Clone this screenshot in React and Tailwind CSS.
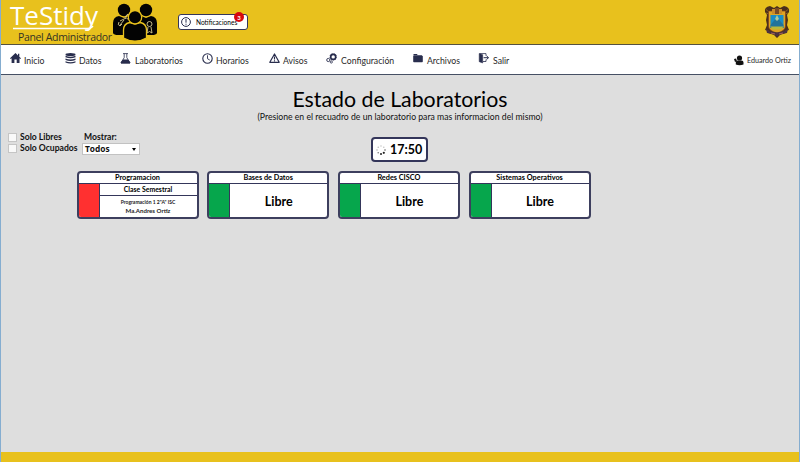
import React from 'react';

const ink = '#282d4d';

function HomeIcon() {
  return (
    <svg width="11" height="10" viewBox="0 0 11 10" fill={ink}>
      <path d="M5.5 0 8 2.4V.8h1.3v2.9L11 5.3l-.7.7-.8-.7V10H6.7V6.6H4.4V10H1.6V5.3l-.9.7L0 5.3z" />
    </svg>
  );
}

function DataIcon() {
  return (
    <svg width="11" height="11" viewBox="0 0 11 11" fill={ink}>
      <ellipse cx="5.5" cy="1.6" rx="5" ry="1.5" />
      <path d="M.5 2.800q5 1.700 10 0v1.500q-5 2-10 0zM.5 5.500q5 2 10 0V7q-5 2-10 0zM.5 8.200q5 2 10 0v1.300q-5 2.200-10 0z" />
    </svg>
  );
}

function FlaskIcon() {
  return (
    <svg width="11" height="11" viewBox="0 0 11 11" fill="none" stroke={ink}>
      <path d="M3 .6h5M4.2.6v4L1 10h9L6.8 4.6v-4" strokeWidth=".8" />
      <path d="M2.700 7h5.600L10 10H1z" fill={ink} />
    </svg>
  );
}

function ClockIcon() {
  return (
    <svg width="11" height="11" viewBox="0 0 11 11" fill="none" stroke={ink}>
      <circle cx="5.5" cy="5.5" r="4.7" strokeWidth="1.1" />
      <path d="M5.5 2.3v3.4l2.3 1.4" strokeWidth=".9" />
    </svg>
  );
}

function WarningIcon() {
  return (
    <svg width="11" height="11" viewBox="0 0 11 11" fill="none" stroke={ink}>
      <path d="M5.5 1 10.2 9.3H.8z" strokeWidth="1.2" strokeLinejoin="round" />
      <path d="M5.5 3.6v3M5.5 7.3v1.1" strokeWidth="1.1" />
    </svg>
  );
}

function GearsIcon() {
  return (
    <svg width="11" height="11" viewBox="0 0 11 11" fill="none" stroke={ink}>
      <circle cx="7.2" cy="3.9" r="2.5" strokeWidth="1.6" />
      <circle cx="7.2" cy="3.9" r="3.4" strokeWidth=".7" strokeDasharray="1.2 1.1" />
      <circle cx="2.3" cy="7" r="1.6" strokeWidth=".9" />
      <circle cx="5.3" cy="9" r="1.100" strokeWidth=".8" />
    </svg>
  );
}

function FolderIcon() {
  return (
    <svg width="10" height="10" viewBox="0 0 10 10" fill={ink}>
      <path d="M.4 1.500q0-.5.5-.5h3l.8 1h4q.6 0 .6.700H.4zM.2 2.900h9.6v5.700q0 .7-.7.7H.9q-.7 0-.7-.7z" />
    </svg>
  );
}

function ExitIcon() {
  return (
    <svg width="11" height="11" viewBox="0 0 11 11" fill="none" stroke={ink}>
      <path d="M1.200.6 4.700 1.700v8.300L1.200 8.700z" fill={ink} strokeWidth=".5" />
      <path d="M1.500.6H8v2.200M8 6.500v2H5" strokeWidth=".8" />
      <path d="M5.600 4.700h4.800M8.500 2.800l2 1.900-2 1.900" strokeWidth="1" />
    </svg>
  );
}

function PeopleLogo() {
  return (
    <svg className="mt-[3px] shrink-0" width="48" height="40" viewBox="0 0 48 40">
      <g fill="#030303">
        <circle cx="14" cy="7" r="6.200" />
        <path d="M3 30V20q0-6 6-7l5 2 5-2q6 1 6 7v12H8q-4 0-5-2z" />
        <circle cx="36" cy="7" r="6.200" />
        <path d="M47 30V20q0-6-6-7l-5 2-5-2q-6 1-6 7v12h17q4 0 5-2z" />
      </g>
      <g fill="none" stroke="#d8cc94" strokeWidth=".9">
        <path d="m10 18 6-3m-7 4q-2 3 1 4l2-2m4-5q-1-4 2-5l1 2 2-1q0 4-4 4m-7 6 4-5" />
        <circle cx="39.500" cy="21" r="2.500" />
        <path d="m38 24-1 6 2.500-1.500L42 30l-1-6" />
      </g>
      <g fill="#030303" stroke="#e8c11d" strokeWidth="1.300">
        <path d="M13.500 35v-8q0-6 6-7.500l5.500 1.500 5.500-1.500q6 1.500 6 7.500v8q-11.500 6.500-23 0z" />
        <circle cx="25" cy="14.200" r="6.700" />
      </g>
    </svg>
  );
}

function Crest() {
  return (
    <svg width="26" height="34" viewBox="0 0 26 34">
      <path d="M6 1Q0 2 1 7l2 3-1 5 1 5-2 5 4 1-1 2 6 2 3 3 3-3 6-2-1-2 4-1-2-5 1-5-1-5 2-3q1-5-5-6l-4 2-3-2-3 2z" fill="#4a2f1c" />
      <path d="M2 4.500 5 7M2 8l3 1M24 4.500 21 7M24 8l-3 1" stroke="#a47425" strokeWidth=".7" />
      <path d="M4.500 6h17v15q0 5-8.500 7-8.500-2-8.500-7z" fill="#dfa321" stroke="#7a3c1b" strokeWidth=".7" />
      <path d="M8 4h10v5H8z" fill="#c98a28" />
      <path d="M11 3h4v6h-4z" fill="#7b4a22" />
      <path d="M6.500 10h13v13h-13z" fill="#1a8cc4" />
      <path d="m6.500 20 6.500-8 6.500 8v3h-13z" fill="#22739a" />
      <path d="m11 14 2-4 2 4-2 2z" fill="#a9c9a0" />
      <path d="M6.500 21.500h13l-2 3h-9z" fill="#b9b83a" />
      <path d="m2 24 5 2.500 6 1 6-1 5-2.500-1 4-7 1-3 2.500-3-2.500-7-1z" fill="#4c3240" />
      <path d="m7 28 4 1m4 0 4-1" stroke="#c06f61" strokeWidth=".8" />
    </svg>
  );
}

function UserIcon() {
  return (
    <svg width="10" height="11" viewBox="0 0 10 11" fill="#111">
      <circle cx="5.500" cy="3" r="2.600" />
      <path d="M1.800 9.500V7.500q0-2 2-2h3.700q2 0 2 2v2q-4 1.500-7.700 0z" />
      <path d="m0 4 2-.5 1 2.700-2 .8z" />
    </svg>
  );
}

function Spinner() {
  return (
    <svg width="10" height="10" viewBox="0 0 10 10" fill="#222">
      <circle cx="5" cy="1" r=".7" opacity=".3" />
      <circle cx="7.800" cy="2.200" r=".7" opacity=".3" />
      <circle cx="9" cy="5" r=".8" opacity=".7" />
      <circle cx="7.800" cy="7.800" r="1.100" />
      <circle cx="5" cy="9" r="1" />
      <circle cx="2.200" cy="7.800" r=".8" opacity=".6" />
      <circle cx="1" cy="5" r=".7" opacity=".4" />
      <circle cx="2.200" cy="2.200" r=".7" opacity=".35" />
    </svg>
  );
}

function NavItem({ icon, label, width, gap }) {
  return (
    <a className={`flex shrink-0 items-start ${width} ${gap}`}>
      <span className="block shrink-0">{icon}</span>
      <span className="mt-[2px] whitespace-nowrap text-[8.7px] leading-[11px]">{label}</span>
    </a>
  );
}

function LabCard({ name, busy = false }) {
  return (
    <article className="flex h-[48px] w-[122px] flex-col overflow-hidden rounded-[4px] border-2 border-[#3d3f5e] bg-white text-center font-bold text-black">
      <h2 className="h-[11px] shrink-0 border-b border-[#34365a] text-[7.300px] leading-[10px]">{name}</h2>
      <div className="flex flex-1">
        <div className={`w-[21px] shrink-0 border-r border-[#34365a] ${busy ? 'bg-[#ff3030]' : 'bg-[#06a64c]'}`} />
        {busy ? (
          <div className="flex-1">
            <div className="h-[12px] border-b border-[#34365a] text-[6.900px] leading-[11px]">Clase Semestral</div>
            <div className="pt-[2px] text-[5px] leading-[8px] text-[#222]">Programación 1 2"A" ISC</div>
            <div className="text-[6.100px] leading-[9px] text-[#222]">Ma.Andres Ortiz</div>
          </div>
        ) : (
          <div className="flex flex-1 items-center justify-center pt-[3px] text-[12.500px] leading-none">Libre</div>
        )}
      </div>
    </article>
  );
}

function Check({ label }) {
  return (
    <label className="flex h-[11px] items-center gap-[3px] text-[8.600px] font-bold leading-[11px]">
      <span className="h-[9px] w-[9px] shrink-0 border border-[#c5c5c5] bg-[#f9f9f9]" />
      <span className="whitespace-nowrap">{label}</span>
    </label>
  );
}

export default function App() {
  return (
    <div className="flex h-[462px] w-[800px] flex-col overflow-hidden border-x border-[#85add0] bg-[#dedede] font-['Lato',sans-serif] text-[#111]">
      <header className="flex h-[45px] shrink-0 border-b border-[#55513f] bg-[#e8c11d]">
        <div className="w-[109px] shrink-0 pl-[9px] font-['Open_Sans',sans-serif]">
          <div className="relative h-[30px]">
            <div className="whitespace-nowrap text-[26px] leading-[30px] text-white">TeStidy</div>
            <svg className="absolute left-[3px] top-[26px]" width="84" height="4" viewBox="0 0 84 4" fill="none" stroke="#fff">
              <path d="M0 2.500h74q4 0 6-2.500" strokeWidth="1.300" />
            </svg>
          </div>
          <div className="ml-[8px] whitespace-nowrap text-[10.500px] leading-[15px] tracking-[-0.35px] text-[#343325]">Panel Administrador</div>
        </div>
        <PeopleLogo />
        <button className="relative ml-[20px] mt-[14px] flex h-[16px] w-[70px] items-center gap-[5px] rounded-[3px] border border-[#34365a] bg-white pl-[2px]">
          <svg className="shrink-0" width="10" height="10" viewBox="0 0 10 10" fill="none" stroke={ink}>
            <circle cx="5" cy="5" r="4.400" />
            <path d="M5 2v3.700M5 6.700v1.100" />
          </svg>
          <span className="pt-px text-[6.600px] leading-none text-black">Notificaciones</span>
          <span className="absolute -top-[3px] right-[3px] flex h-[10px] w-[10px] items-center justify-center rounded-full bg-[#d7080d] text-[6px] font-bold text-white">3</span>
        </button>
        <div className="ml-auto mr-[9px] mt-[5px]"><Crest /></div>
      </header>
      <nav className="flex h-[30px] shrink-0 items-start border-b border-[#465064] bg-white pl-[9px] pt-[8px] text-[#292929]">
        <NavItem icon={<HomeIcon />} label="Inicio" width="w-[55px]" gap="gap-[3px]" />
        <NavItem icon={<DataIcon />} label="Datos" width="w-[55px]" gap="gap-[3px]" />
        <NavItem icon={<FlaskIcon />} label="Laboratorios" width="w-[82px]" gap="gap-[4px]" />
        <NavItem icon={<ClockIcon />} label="Horarios" width="w-[67px]" gap="gap-[3px]" />
        <NavItem icon={<WarningIcon />} label="Avisos" width="w-[57px]" gap="gap-[3px]" />
        <NavItem icon={<GearsIcon />} label="Configuración" width="w-[87px]" gap="gap-[4px]" />
        <NavItem icon={<FolderIcon />} label="Archivos" width="w-[65px]" gap="gap-[4px]" />
        <NavItem icon={<ExitIcon />} label="Salir" width="w-[45px]" gap="gap-[4px]" />
        <div className="ml-auto mr-[8px] mt-[2px] flex items-center gap-[3px] whitespace-nowrap text-[7.200px] leading-[11px]">
          <UserIcon />
          <span>Eduardo Ortiz</span>
        </div>
      </nav>
      <main className="flex min-h-0 flex-1 flex-col">
        <h1 className="mt-[12px] h-[24px] whitespace-nowrap text-center text-[21.300px] leading-[24px] text-black">Estado de Laboratorios</h1>
        <p className="h-[11px] whitespace-nowrap text-center text-[8.670px] leading-[11px]">(Presione en el recuadro de un laboratorio para mas informacion del mismo)</p>
        <div className="mt-[10px] flex h-[30px] pl-[7px]">
          <div className="w-[74px] shrink-0">
            <Check label="Solo Libres" />
            <Check label="Solo Ocupados" />
          </div>
          <div className="w-[58px] shrink-0 text-[8.600px] font-bold leading-[11px]">
            <div className="pl-[2px]">Mostrar:</div>
            <div className="flex h-[12px] w-[58px] items-center justify-between border border-[#c2c2c2] bg-white pl-[2px] pr-[3px]">
              <span className="font-['Open_Sans',sans-serif] text-[8.400px] leading-[10px]">Todos</span>
              <svg width="4" height="3" viewBox="0 0 4 3"><path d="M0 0h4L2 3z" /></svg>
            </div>
          </div>
          <div className="ml-[231px] mt-[5px] flex h-[25px] w-[57px] shrink-0 items-center gap-[4px] rounded-[4px] border-2 border-[#34365a] bg-white pl-[3px] font-bold text-black">
            <Spinner />
            <span className="pt-px text-[12.500px] leading-none">17:50</span>
          </div>
        </div>
        <div className="ml-[75.500px] mt-[9px] flex gap-[8.700px]">
          <LabCard name="Programacion" busy />
          <LabCard name="Bases de Datos" />
          <LabCard name="Redes CISCO" />
          <LabCard name="Sistemas Operativos" />
        </div>
      </main>
      <footer className="h-[10px] shrink-0 bg-[#e8c11d]" />
    </div>
  );
}
